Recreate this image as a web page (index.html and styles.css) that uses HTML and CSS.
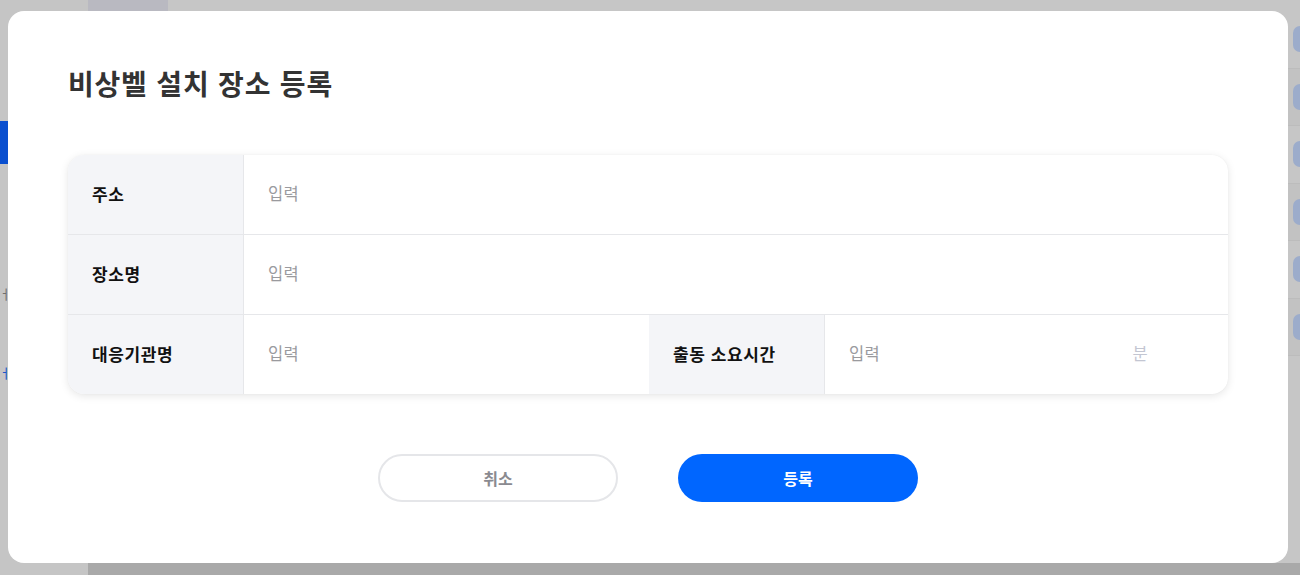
FILE: index.html
```html
<!DOCTYPE html>
<html lang="ko">
<head>
<meta charset="utf-8">
<title>비상벨 설치 장소 등록</title>
<link rel="stylesheet" href="styles.css">
</head>
<body>
<div class="page">
  <aside class="sidebar">
    <div class="nav-active"></div>
    <div class="nav-item nav-gray"><span class="nav-label">ㅓ 관리</span></div>
    <div class="nav-item nav-blue"><span class="nav-label">ㅓ 관리</span></div>
  </aside>
  <main class="content">
    <div class="topbar">
      <div class="tab-dim"></div>
    </div>
    <div class="body-area">
      <div class="list">
        <div class="list-row"><span class="chip"></span></div>
        <div class="list-row"><span class="chip"></span></div>
        <div class="list-row"><span class="chip"></span></div>
        <div class="list-row"><span class="chip"></span></div>
        <div class="list-row"><span class="chip"></span></div>
        <div class="list-row"><span class="chip"></span></div>
      </div>
    </div>
    <div class="footer-strip"></div>
  </main>
</div>

<div class="modal">
  <h1 class="modal-title">비상벨 설치 장소 등록</h1>
  <div class="form-table">
    <div class="form-row">
      <div class="form-label">주소</div>
      <div class="form-input"><span class="placeholder">입력</span></div>
    </div>
    <div class="form-row">
      <div class="form-label">장소명</div>
      <div class="form-input"><span class="placeholder">입력</span></div>
    </div>
    <div class="form-row">
      <div class="form-label">대응기관명</div>
      <div class="form-input half"><span class="placeholder">입력</span></div>
      <div class="form-label">출동 소요시간</div>
      <div class="form-input half unit-input"><span class="placeholder">입력</span><span class="unit">분</span></div>
    </div>
  </div>
  <div class="actions">
    <button class="btn btn-cancel">취소</button>
    <button class="btn btn-primary">등록</button>
  </div>
</div>
</body>
</html>
```

FILE: styles.css
```css
* { box-sizing: border-box; }

html, body {
  margin: 0;
  padding: 0;
  width: 1300px;
  height: 575px;
  overflow: hidden;
  font-family: "Noto Sans CJK KR", "Noto Sans", sans-serif;
}

.page {
  display: flex;
  width: 1300px;
  height: 575px;
  background: #c6c6c6;
}

.sidebar {
  width: 88px;
  height: 575px;
  background: #c5c5c5;
  display: flex;
  flex-direction: column;
}

.nav-active {
  margin-top: 121px;
  width: 88px;
  height: 43px;
  background: #0a4fcf;
}

.nav-item {
  height: 20px;
  font-size: 13px;
  line-height: 20px;
  white-space: nowrap;
  overflow: hidden;
}

.nav-gray { margin-top: 120px; color: #6f6f6f; }
.nav-blue { margin-top: 59px; color: #1a55c8; }

.nav-label { display: inline-block; margin-left: -1px; }

.content {
  flex: 1;
  display: flex;
  flex-direction: column;
  height: 575px;
}

.topbar {
  height: 11px;
  display: flex;
}

.tab-dim {
  width: 80px;
  height: 11px;
  background: #b9b9c1;
}

.body-area {
  flex: 1;
  display: flex;
  justify-content: flex-end;
}

.list {
  width: 12px;
  display: flex;
  flex-direction: column;
}

.list-row {
  height: 57.5px;
  display: flex;
  align-items: center;
  padding-left: 5px;
  border-bottom: 1px solid #bcbcbc;
}

.list-row:nth-child(even) { background: #c2c2c2; }

.chip {
  width: 12px;
  height: 26px;
  border-radius: 8px 0 0 8px;
  background: #9caccb;
}

.footer-strip {
  height: 12px;
  background: #a9a9a9;
}

/* modal */
.modal {
  position: absolute;
  left: 8px;
  top: 11px;
  width: 1280px;
  height: 552px;
  background: #ffffff;
  border-radius: 16px;
  padding: 57px 60px 60px;
  display: flex;
  flex-direction: column;
}

.modal-title {
  margin: 0;
  font-size: 28px;
  line-height: 30px;
  font-weight: 700;
  color: #333333;
  letter-spacing: 0.8px;
}

.form-table {
  margin-top: 57px;
  border-radius: 16px;
  box-shadow: 0 2px 8px rgba(0, 0, 0, 0.10), 0 0 1px rgba(0, 0, 0, 0.08);
  overflow: hidden;
  display: flex;
  flex-direction: column;
}

.form-row {
  display: flex;
  height: 80px;
  border-bottom: 1px solid #e6e7ea;
}

.form-row:last-child {
  height: 79px;
  border-bottom: none;
}

.form-label {
  width: 176px;
  flex-shrink: 0;
  background: #f4f5f8;
  border-right: 1px solid #e6e7ea;
  display: flex;
  align-items: center;
  padding-left: 24px;
  padding-bottom: 3px;
  font-size: 17px;
  letter-spacing: 0.6px;
  font-weight: 700;
  color: #111111;
}

.form-input {
  flex: 1;
  display: flex;
  align-items: center;
  padding-left: 24px;
  padding-bottom: 3px;
  font-size: 16.5px;
  letter-spacing: 0.3px;
}

.form-input.half {
  flex: 0 0 405px;
}

.form-input.half.unit-input {
  flex: 1;
  padding-right: 80px;
  justify-content: space-between;
}

.placeholder { color: #9a9a9e; }

.unit { color: #c3c6d2; }

.actions {
  margin-top: 60px;
  display: flex;
  justify-content: center;
  gap: 60px;
}

.btn {
  width: 240px;
  height: 48px;
  border-radius: 24px;
  font-family: "Noto Sans CJK KR", "Noto Sans", sans-serif;
  font-size: 16px;
  font-weight: 700;
  cursor: pointer;
}

.btn-cancel {
  background: #ffffff;
  border: 2px solid #e5e6e9;
  color: #8a8a90;
}

.btn-primary {
  background: #0066ff;
  border: none;
  color: #ffffff;
}
```
